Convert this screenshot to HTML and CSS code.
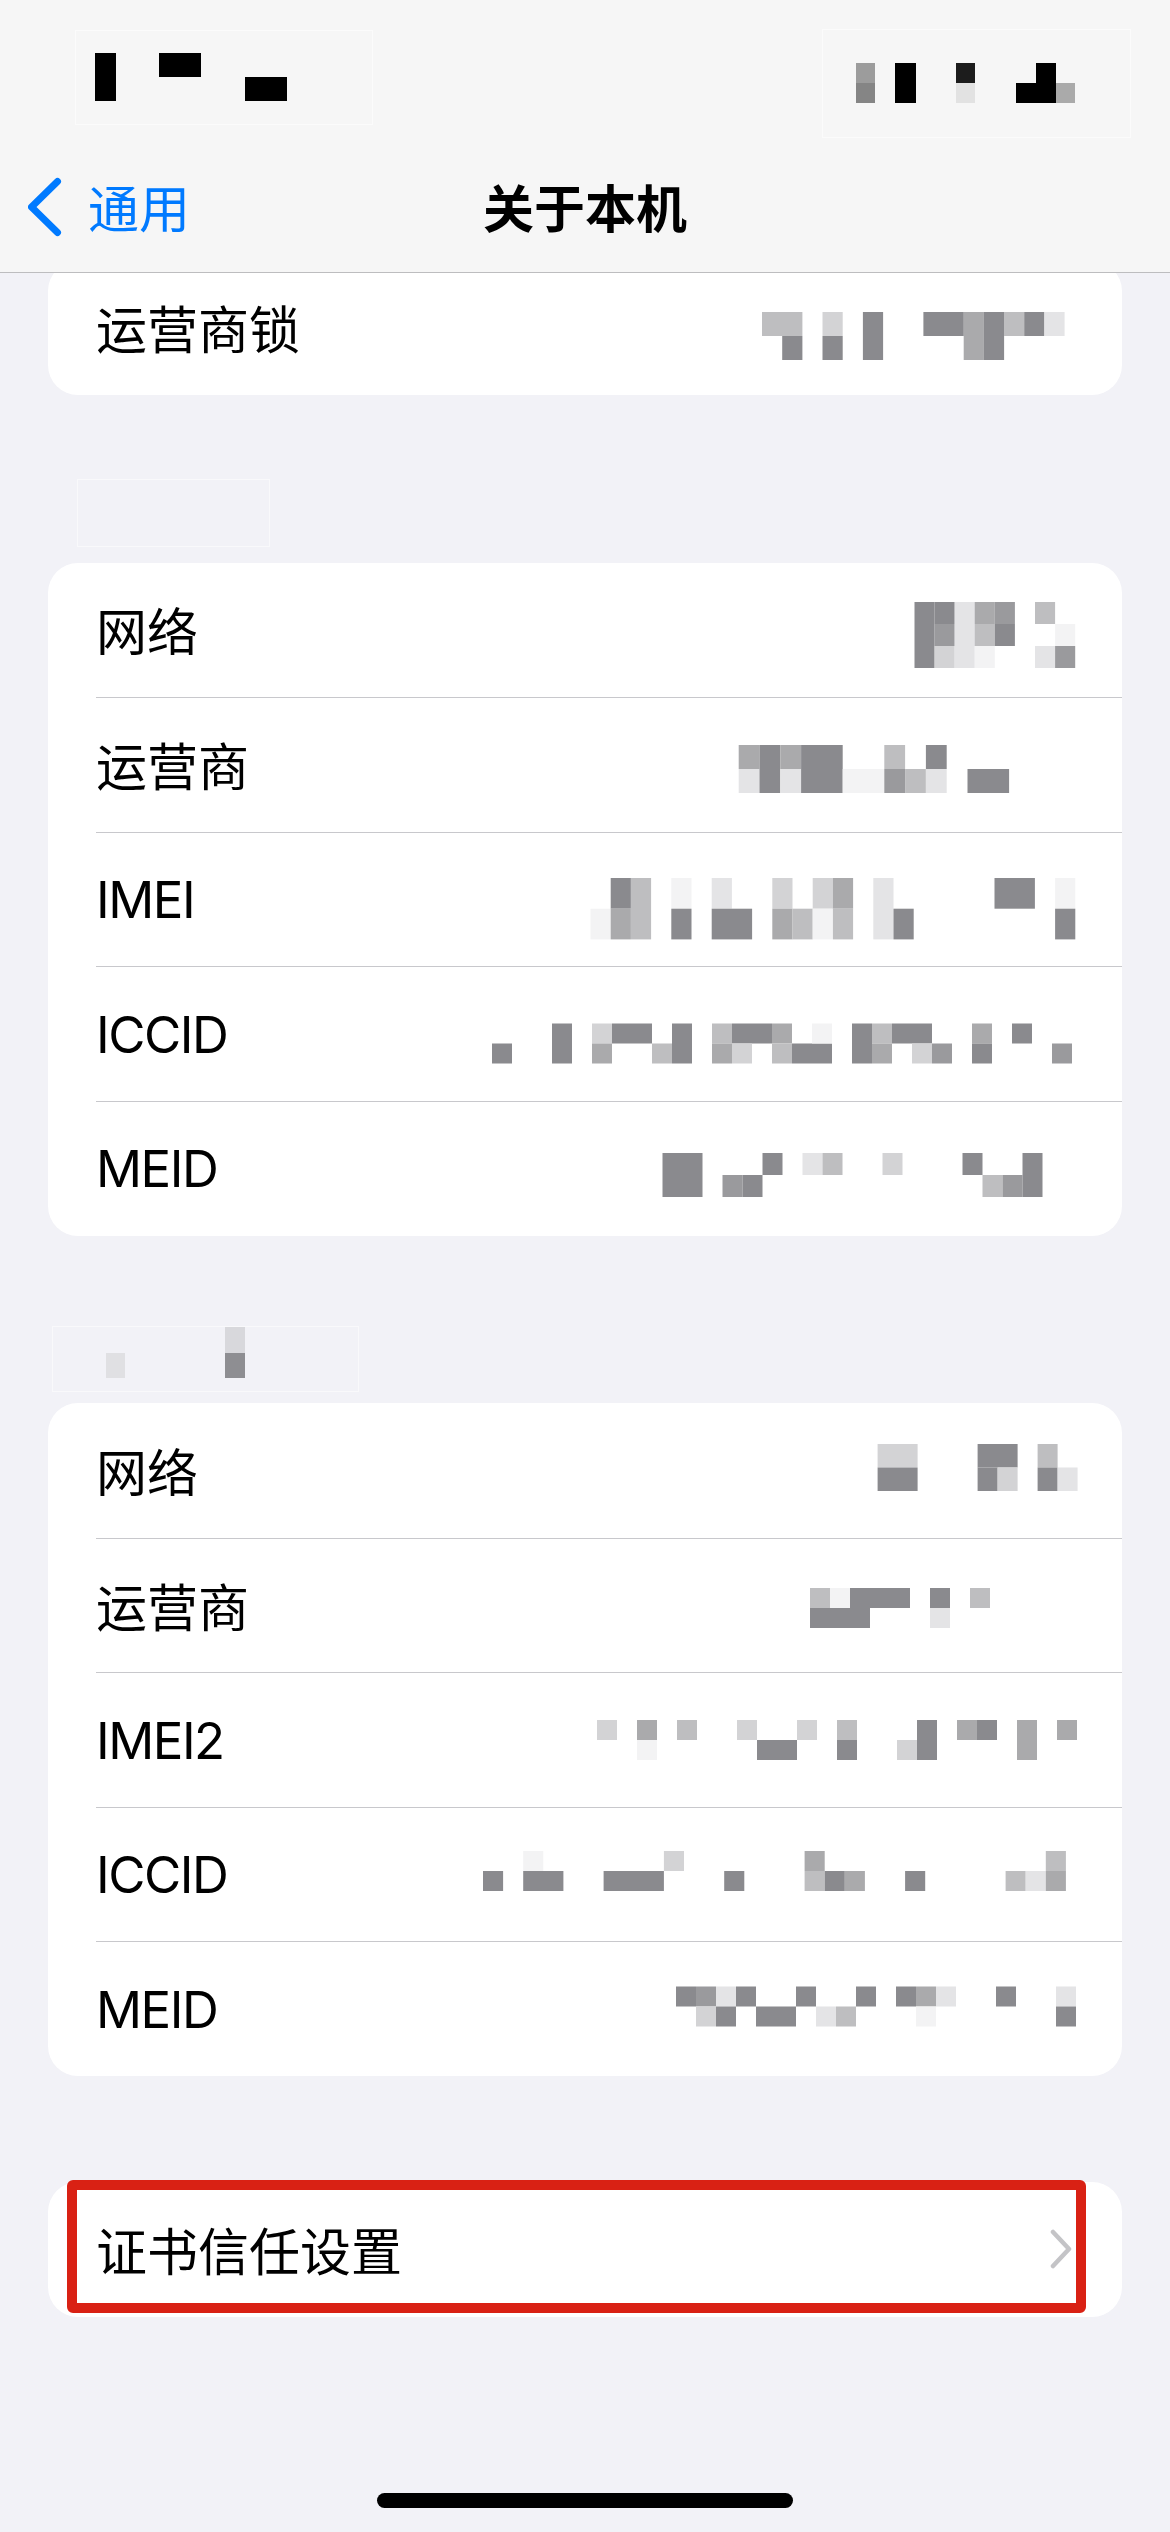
FILE: index.html
```html
<!DOCTYPE html>
<html lang="zh-CN">
<head>
<meta charset="utf-8">
<title>关于本机</title>
<link rel="stylesheet" href="styles.css">
</head>
<body>
<header class="top">
  <div class="status">
    <svg class="st" width="352" height="141" viewBox="0 0 352 141">
      <rect class="blurbox" x="27.5" y="30.5" width="297" height="94"/>
      <rect x="47" y="53" width="21" height="48" fill="#000"/>
      <rect x="111" y="53" width="42" height="24" fill="#000"/>
      <rect x="197" y="77" width="42" height="24" fill="#000"/>
    </svg>
    <svg class="st" width="350" height="141" viewBox="0 0 350 141">
      <rect class="blurbox" x="22.5" y="29.5" width="308" height="108"/>
      <rect x="56" y="63" width="19" height="20" fill="#9c9c9c"/>
      <rect x="56" y="83" width="19" height="20" fill="#858585"/>
      <rect x="95" y="63" width="21" height="40" fill="#000"/>
      <rect x="156" y="63" width="19" height="20" fill="#1c1c1c"/>
      <rect x="156" y="83" width="19" height="20" fill="#e2e2e2"/>
      <rect x="236" y="63" width="20" height="40" fill="#000"/>
      <rect x="216" y="83" width="20" height="20" fill="#000"/>
      <rect x="256" y="83" width="19" height="20" fill="#aaaaaa"/>
    </svg>
  </div>
  <nav class="nav">
    <a class="back">
      <svg width="36" height="60" viewBox="0 0 36 60"><path d="M29.5 4.5 L3.5 30 L29.5 55.5" fill="none" stroke="#007aff" stroke-width="7" stroke-linecap="round" stroke-linejoin="round"/></svg>
      <span>通用</span>
    </a>
    <h1 class="title">关于本机</h1>
    <span class="spacer"></span>
  </nav>
</header>

<main class="content">
  <section class="card">
    <div class="row">
      <span class="label">运营商锁</span>
      <svg class="mz" width="600" height="134" viewBox="0 0 600 134">
        <rect class="d" x="282" y="51" width="40.4" height="24"/>
        <rect class="g" x="302.2" y="75" width="20.2" height="24"/>
        <rect class="c" x="342.5" y="51" width="20.2" height="24"/>
        <rect class="g" x="342.5" y="75" width="20.2" height="24"/>
        <rect class="g" x="382.9" y="51" width="20.2" height="48"/>
        <rect class="g" x="443.4" y="51" width="40.4" height="24"/>
        <rect class="e" x="483.7" y="51" width="20.2" height="48"/>
        <rect class="g" x="503.9" y="51" width="20.2" height="48"/>
        <rect class="d" x="524" y="51" width="20.2" height="24"/>
        <rect class="g" x="544.2" y="51" width="20.2" height="24"/>
        <rect class="b" x="564.4" y="51" width="20.2" height="24"/>
      </svg>
    </div>
  </section>

  <div class="section">
    <svg width="400" height="167" viewBox="0 0 400 167">
      <rect class="hbox" x="29.5" y="84.5" width="192" height="67"/>
    </svg>
  </div>

  <section class="card">
    <div class="row">
      <span class="label">网络</span>
      <svg class="mz" width="600" height="134" viewBox="0 0 600 134">
        <rect class="g" x="434.5" y="39" width="20.1" height="66"/>
        <rect class="g" x="454.6" y="39" width="20.1" height="22"/>
        <rect class="f" x="454.6" y="61" width="20.1" height="22"/>
        <rect class="c" x="454.6" y="83" width="20.1" height="22"/>
        <rect class="b" x="474.7" y="39" width="20.1" height="66"/>
        <rect class="e" x="494.7" y="39" width="20.1" height="22"/>
        <rect class="d" x="494.7" y="61" width="20.1" height="22"/>
        <rect class="a" x="494.7" y="83" width="20.1" height="22"/>
        <rect class="f" x="514.8" y="39" width="20.1" height="22"/>
        <rect class="g" x="514.8" y="61" width="20.1" height="22"/>
        <rect class="d" x="555" y="39" width="20.1" height="22"/>
        <rect class="b" x="555" y="83" width="20.1" height="22"/>
        <rect class="a" x="575.1" y="61" width="20.1" height="22"/>
        <rect class="f" x="575.1" y="83" width="20.1" height="22"/>
      </svg>
    </div>
    <div class="row">
      <span class="label">运营商</span>
      <svg class="mz" width="600" height="134" viewBox="0 0 600 134">
        <rect class="e" x="258.7" y="47" width="20.8" height="24"/>
        <rect class="b" x="258.7" y="71" width="20.8" height="24"/>
        <rect class="g" x="279.5" y="47" width="20.8" height="48"/>
        <rect class="e" x="300.3" y="47" width="20.8" height="24"/>
        <rect class="b" x="300.3" y="71" width="20.8" height="24"/>
        <rect class="g" x="321.1" y="47" width="41.6" height="48"/>
        <rect class="a" x="362.7" y="71" width="41.6" height="24"/>
        <rect class="d" x="404.3" y="47" width="20.8" height="24"/>
        <rect class="f" x="404.3" y="71" width="20.8" height="24"/>
        <rect class="d" x="425.1" y="71" width="20.8" height="24"/>
        <rect class="g" x="445.9" y="47" width="20.8" height="24"/>
        <rect class="b" x="445.9" y="71" width="20.8" height="24"/>
        <rect class="g" x="487.5" y="71" width="41.6" height="24"/>
      </svg>
    </div>
    <div class="row">
      <span class="label lat">IMEI</span>
      <svg class="mz" width="600" height="134" viewBox="0 0 600 134">
        <rect class="a" x="110.5" y="75.7" width="20.2" height="30.7"/>
        <rect class="g" x="130.7" y="45" width="20.2" height="30.7"/>
        <rect class="e" x="130.7" y="75.7" width="20.2" height="30.7"/>
        <rect class="d" x="150.9" y="45" width="20.2" height="61.4"/>
        <rect class="a" x="191.3" y="45" width="20.2" height="30.7"/>
        <rect class="g" x="191.3" y="75.7" width="20.2" height="30.7"/>
        <rect class="b" x="231.7" y="45" width="20.2" height="30.7"/>
        <rect class="g" x="231.7" y="75.7" width="40.4" height="30.7"/>
        <rect class="c" x="292.3" y="45" width="20.2" height="30.7"/>
        <rect class="e" x="292.3" y="75.7" width="20.2" height="30.7"/>
        <rect class="d" x="312.5" y="75.7" width="20.2" height="30.7"/>
        <rect class="c" x="332.7" y="45" width="20.2" height="30.7"/>
        <rect class="a" x="332.7" y="75.7" width="20.2" height="30.7"/>
        <rect class="e" x="352.9" y="45" width="20.2" height="30.7"/>
        <rect class="d" x="352.9" y="75.7" width="20.2" height="30.7"/>
        <rect class="b" x="393.3" y="45" width="20.2" height="61.4"/>
        <rect class="g" x="413.5" y="75.7" width="20.2" height="30.7"/>
        <rect class="g" x="514.5" y="45" width="40.4" height="30.7"/>
        <rect class="a" x="575.1" y="45" width="20.2" height="30.7"/>
        <rect class="g" x="575.1" y="75.7" width="20.2" height="30.7"/>
      </svg>
    </div>
    <div class="row">
      <span class="label lat">ICCID</span>
      <svg class="mz" width="600" height="134" viewBox="0 0 600 134">
        <rect class="g" x="12" y="76.5" width="20" height="20"/>
        <rect class="g" x="72" y="56.5" width="20" height="40"/>
        <rect class="c" x="112" y="56.5" width="20" height="20"/>
        <rect class="e" x="112" y="76.5" width="20" height="20"/>
        <rect class="g" x="132" y="56.5" width="40" height="20"/>
        <rect class="d" x="172" y="76.5" width="20" height="20"/>
        <rect class="g" x="192" y="56.5" width="20" height="40"/>
        <rect class="d" x="232" y="56.5" width="20" height="20"/>
        <rect class="e" x="232" y="76.5" width="20" height="20"/>
        <rect class="g" x="252" y="56.5" width="40" height="20"/>
        <rect class="c" x="252" y="76.5" width="20" height="20"/>
        <rect class="e" x="292" y="56.5" width="20" height="20"/>
        <rect class="d" x="292" y="76.5" width="20" height="20"/>
        <rect class="g" x="312" y="76.5" width="40" height="20"/>
        <rect class="a" x="332" y="56.5" width="20" height="20"/>
        <rect class="g" x="372" y="56.5" width="20" height="40"/>
        <rect class="d" x="392" y="56.5" width="20" height="20"/>
        <rect class="e" x="392" y="76.5" width="20" height="20"/>
        <rect class="g" x="412" y="56.5" width="40" height="20"/>
        <rect class="c" x="432" y="76.5" width="20" height="20"/>
        <rect class="f" x="452" y="76.5" width="20" height="20"/>
        <rect class="e" x="492" y="56.5" width="20" height="20"/>
        <rect class="g" x="492" y="76.5" width="20" height="20"/>
        <rect class="g" x="532" y="56.5" width="20" height="20"/>
        <rect class="f" x="572" y="76.5" width="20" height="20"/>
      </svg>
    </div>
    <div class="row">
      <span class="label lat">MEID</span>
      <svg class="mz" width="600" height="134" viewBox="0 0 600 134">
        <rect class="g" x="182.5" y="51" width="40" height="44"/>
        <rect class="f" x="242.5" y="73" width="20" height="22"/>
        <rect class="g" x="262.5" y="73" width="20" height="22"/>
        <rect class="g" x="282.5" y="51" width="20" height="22"/>
        <rect class="b" x="322.5" y="51" width="20" height="22"/>
        <rect class="d" x="342.5" y="51" width="20" height="22"/>
        <rect class="c" x="402.5" y="51" width="20" height="22"/>
        <rect class="g" x="482.5" y="51" width="20" height="22"/>
        <rect class="d" x="502.5" y="73" width="20" height="22"/>
        <rect class="f" x="522.5" y="73" width="20" height="22"/>
        <rect class="g" x="542.5" y="51" width="20" height="44"/>
      </svg>
    </div>
  </section>

  <div class="section">
    <svg width="400" height="167" viewBox="0 0 400 167">
      <rect class="hbox" x="4.5" y="90.5" width="306" height="65"/>
      <rect x="58" y="117" width="19" height="25" fill="#e0e0e3"/>
      <rect x="177" y="91" width="20" height="26" fill="#d8d8dc"/>
      <rect x="177" y="117" width="20" height="25" fill="#8e8e92"/>
    </svg>
  </div>

  <section class="card">
    <div class="row">
      <span class="label">网络</span>
      <svg class="mz" width="600" height="134" viewBox="0 0 600 134">
        <rect class="c" x="397.6" y="41" width="40" height="23.5"/>
        <rect class="g" x="397.6" y="64.5" width="40" height="23.5"/>
        <rect class="g" x="497.6" y="41" width="40" height="23.5"/>
        <rect class="g" x="497.6" y="64.5" width="20" height="23.5"/>
        <rect class="c" x="517.6" y="64.5" width="20" height="23.5"/>
        <rect class="d" x="557.6" y="41" width="20" height="23.5"/>
        <rect class="g" x="557.6" y="64.5" width="20" height="23.5"/>
        <rect class="b" x="577.6" y="64.5" width="20" height="23.5"/>
      </svg>
    </div>
    <div class="row">
      <span class="label">运营商</span>
      <svg class="mz" width="600" height="134" viewBox="0 0 600 134">
        <rect class="d" x="330" y="50" width="20" height="20"/>
        <rect class="a" x="350" y="50" width="20" height="20"/>
        <rect class="g" x="370" y="50" width="60" height="20"/>
        <rect class="g" x="450" y="50" width="20" height="20"/>
        <rect class="d" x="490" y="50" width="20" height="20"/>
        <rect class="g" x="330" y="70" width="60" height="20"/>
        <rect class="b" x="450" y="70" width="20" height="20"/>
      </svg>
    </div>
    <div class="row">
      <span class="label lat">IMEI2</span>
      <svg class="mz" width="600" height="134" viewBox="0 0 600 134">
        <rect class="c" x="117" y="47" width="20" height="20"/>
        <rect class="e" x="157" y="47" width="20" height="20"/>
        <rect class="a" x="157" y="67" width="20" height="20"/>
        <rect class="d" x="197" y="47" width="20" height="20"/>
        <rect class="c" x="257" y="47" width="20" height="20"/>
        <rect class="g" x="277" y="67" width="40" height="20"/>
        <rect class="c" x="317" y="47" width="20" height="20"/>
        <rect class="d" x="357" y="47" width="20" height="20"/>
        <rect class="g" x="357" y="67" width="20" height="20"/>
        <rect class="c" x="417" y="67" width="20" height="20"/>
        <rect class="g" x="437" y="47" width="20" height="40"/>
        <rect class="e" x="477" y="47" width="20" height="20"/>
        <rect class="g" x="497" y="47" width="20" height="20"/>
        <rect class="e" x="537" y="47" width="20" height="40"/>
        <rect class="e" x="577" y="47" width="20" height="20"/>
      </svg>
    </div>
    <div class="row">
      <span class="label lat">ICCID</span>
      <svg class="mz" width="600" height="134" viewBox="0 0 600 134">
        <rect class="a" x="43.2" y="43" width="20.1" height="20"/>
        <rect class="c" x="183.9" y="43" width="20.1" height="20"/>
        <rect class="e" x="324.6" y="43" width="20.1" height="20"/>
        <rect class="d" x="565.8" y="43" width="20.1" height="20"/>
        <rect class="g" x="3" y="63" width="20.1" height="20"/>
        <rect class="g" x="43.2" y="63" width="40.2" height="20"/>
        <rect class="g" x="123.6" y="63" width="60.3" height="20"/>
        <rect class="g" x="244.2" y="63" width="20.1" height="20"/>
        <rect class="d" x="324.6" y="63" width="20.1" height="20"/>
        <rect class="g" x="344.7" y="63" width="20.1" height="20"/>
        <rect class="e" x="364.8" y="63" width="20.1" height="20"/>
        <rect class="g" x="425.1" y="63" width="20.1" height="20"/>
        <rect class="d" x="525.6" y="63" width="20.1" height="20"/>
        <rect class="b" x="545.7" y="63" width="20.1" height="20"/>
        <rect class="e" x="565.8" y="63" width="20.1" height="20"/>
      </svg>
    </div>
    <div class="row">
      <span class="label lat">MEID</span>
      <svg class="mz" width="600" height="134" viewBox="0 0 600 134">
        <rect class="g" x="196" y="44.5" width="20" height="20"/>
        <rect class="f" x="216" y="44.5" width="20" height="20"/>
        <rect class="b" x="236" y="44.5" width="20" height="20"/>
        <rect class="g" x="256" y="44.5" width="20" height="20"/>
        <rect class="g" x="316" y="44.5" width="20" height="20"/>
        <rect class="g" x="376" y="44.5" width="20" height="20"/>
        <rect class="g" x="416" y="44.5" width="20" height="20"/>
        <rect class="e" x="436" y="44.5" width="20" height="20"/>
        <rect class="b" x="456" y="44.5" width="20" height="20"/>
        <rect class="g" x="516" y="44.5" width="20" height="20"/>
        <rect class="b" x="576" y="44.5" width="20" height="20"/>
        <rect class="c" x="216" y="64.5" width="20" height="20"/>
        <rect class="g" x="236" y="64.5" width="20" height="20"/>
        <rect class="g" x="276" y="64.5" width="40" height="20"/>
        <rect class="b" x="336" y="64.5" width="20" height="20"/>
        <rect class="d" x="356" y="64.5" width="20" height="20"/>
        <rect class="a" x="436" y="64.5" width="20" height="20"/>
        <rect class="g" x="576" y="64.5" width="20" height="20"/>
      </svg>
    </div>
  </section>

  <div class="gap"></div>

  <section class="card link">
    <div class="row">
      <span class="label">证书信任设置</span>
      <svg class="chev" width="22" height="40" viewBox="0 0 22 40"><path d="M3 3 L19 20 L3 37" fill="none" stroke="#c4c4c7" stroke-width="4.5" stroke-linecap="round" stroke-linejoin="round"/></svg>
    </div>
    <div class="highlight"></div>
  </section>

  <div class="home"><span class="home-bar"></span></div>
</main>
</body>
</html>
```

FILE: styles.css
```css
* {
  box-sizing: border-box;
  margin: 0;
  padding: 0;
}

html,
body {
  width: 1170px;
  height: 2532px;
  overflow: hidden;
}

body {
  background: #f2f2f7;
  font-family: "Inter", "Noto Sans CJK SC", sans-serif;
  color: #000;
}

.top {
  position: fixed;
  top: 0;
  left: 0;
  right: 0;
  height: 273px;
  background: #f6f6f6;
  border-bottom: 1px solid #bdbdbf;
  z-index: 10;
}

.status {
  height: 141px;
  display: flex;
  justify-content: space-between;
  padding: 0 20px 0 48px;
}

.st {
  display: block;
}

.blurbox {
  fill: #f6f6f6;
  stroke: #fbfbfb;
  stroke-width: 1;
}

.nav {
  height: 131px;
  display: grid;
  grid-template-columns: 1fr auto 1fr;
  align-items: center;
}

.back {
  display: flex;
  align-items: center;
  padding-left: 28px;
  color: #007aff;
  font-family: "Noto Sans CJK SC", sans-serif;
  font-size: 51px;
  line-height: 1;
}

.back svg {
  display: block;
}

.back span {
  margin-left: 24px;
}

.title {
  font-family: "Noto Sans CJK SC", sans-serif;
  font-size: 51px;
  font-weight: 600;
  line-height: 1;
}

.content {
  padding: 260.5px 48px 0;
}

.card {
  background: #fff;
  border-radius: 30px;
}

.card.link {
  position: relative;
}

.row {
  display: flex;
  align-items: center;
  height: 134.6px;
  margin-left: 48px;
  padding-right: 42px;
}

.row + .row {
  border-top: 1px solid #c8c8cc;
}

.label {
  flex: 1;
  font-size: 51px;
  line-height: 1;
  font-family: "Noto Sans CJK SC", sans-serif;
}

.label.lat {
  font-family: "Inter", sans-serif;
  letter-spacing: -1.5px;
}

.mz {
  display: block;
  flex: none;
}

.mz .a { fill: #f3f3f4; }
.mz .b { fill: #e4e4e6; }
.mz .c { fill: #d3d3d5; }
.mz .d { fill: #bebec0; }
.mz .e { fill: #aaaaac; }
.mz .f { fill: #9a9a9d; }
.mz .g { fill: #8a8a8e; }

.section {
  height: 167.5px;
}

.section svg {
  display: block;
}

.hbox {
  fill: #f2f2f7;
  stroke: #f9f9fb;
  stroke-width: 1;
}

.gap {
  height: 106px;
}

.card.link .row {
  padding-right: 50px;
}

.chev {
  display: block;
  flex: none;
}

.highlight {
  position: absolute;
  left: 19px;
  top: -2px;
  width: 1019px;
  height: 133px;
  border: 10px solid #d92114;
  border-radius: 6px;
}

.home {
  padding-top: 176px;
  display: flex;
  justify-content: center;
}

.home-bar {
  display: block;
  width: 416px;
  height: 15px;
  border-radius: 8px;
  background: #000;
}
```
